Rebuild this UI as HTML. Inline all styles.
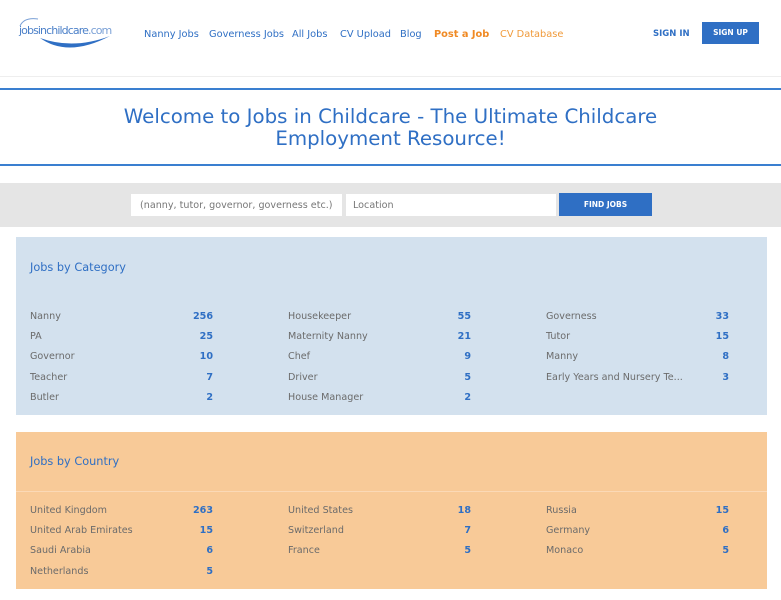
<!DOCTYPE html>
<html><head><meta charset="utf-8"><style>
*{margin:0;padding:0;box-sizing:border-box}
body{width:781px;height:600px;background:#fff;font-family:"DejaVu Sans","Liberation Sans",sans-serif;position:relative;overflow:hidden}
.a{position:absolute;white-space:nowrap}
.nav{font-size:9.8px;color:#2f6fc4;top:29px}
.row{position:absolute;font-size:9.6px;color:#6b6b6b;height:14px;line-height:14px}
.row b{position:absolute;right:0;color:#2f6fc4;font-weight:bold}
</style></head><body>
<svg class="a" style="left:18px;top:14px" width="96" height="40" viewBox="0 0 96 40">
<text x="1" y="20" font-size="11" fill="#4a7fc8" font-family="DejaVu Sans,sans-serif" letter-spacing="-0.9">jobsinchildcare<tspan fill="#7aa0d6">.com</tspan></text>
<path d="M22 24 Q50 44 92 22 Q55 36 22 24Z" fill="#2f6fc4"/>
<path d="M2 12 Q6 3 20 5" stroke="#7aa0d6" fill="none"/>
</svg>
<div class="a nav" style="left:144px">Nanny Jobs</div>
<div class="a nav" style="left:209px">Governess Jobs</div>
<div class="a nav" style="left:292px">All Jobs</div>
<div class="a nav" style="left:340px">CV Upload</div>
<div class="a nav" style="left:400px">Blog</div>
<div class="a nav" style="left:434px;color:#f08a24;font-weight:bold">Post a Job</div>
<div class="a nav" style="left:500px;color:#f09a3a">CV Database</div>
<div class="a" style="left:653px;top:29px;font-size:8.5px;font-weight:bold;color:#2f6fc4">SIGN IN</div>
<div class="a" style="left:702px;top:22px;width:57px;height:22px;background:#2f6fc4;color:#fff;font-size:7.5px;font-weight:bold;text-align:center;line-height:22px">SIGN UP</div>
<div class="a" style="left:0;top:76px;width:781px;height:1px;background:#eee"></div>
<div class="a" style="left:0;top:88px;width:781px;height:2px;background:#3a7fd0"></div>
<div class="a" style="left:0;top:106px;width:781px;text-align:center;font-size:19.8px;color:#2f6fc4;line-height:22px;white-space:normal">Welcome to Jobs in Childcare - The Ultimate Childcare<br>Employment Resource!</div>
<div class="a" style="left:0;top:164px;width:781px;height:2px;background:#3a7fd0"></div>
<div class="a" style="left:0;top:183px;width:781px;height:44px;background:#e5e5e5"></div>
<div class="a" style="left:131px;top:194px;width:211px;height:22px;background:#fff;font-size:9.6px;color:#777;padding:6px 9px">(nanny, tutor, governor, governess etc.)</div>
<div class="a" style="left:346px;top:194px;width:210px;height:22px;background:#fff;font-size:9.6px;color:#777;padding:6px 7px">Location</div>
<div class="a" style="left:559px;top:193px;width:93px;height:23px;background:#2f6fc4;color:#fff;font-size:7.5px;font-weight:bold;text-align:center;line-height:23px">FIND JOBS</div>
<div class="a" style="left:16px;top:237px;width:751px;height:178px;background:#d3e1ee"></div>
<div class="a" style="left:30px;top:261px;font-size:11.3px;color:#2f6fc4">Jobs by Category</div>
<div class="a" style="left:16px;top:432px;width:751px;height:157px;background:#f8ca98"></div>
<div class="a" style="left:16px;top:491px;width:751px;height:1px;background:#fbd9b6"></div>
<div class="a" style="left:30px;top:455px;font-size:11.3px;color:#2f6fc4">Jobs by Country</div>

<div class="row" style="left:30px;top:310px;width:183px">Nanny<b>256</b></div>
<div class="row" style="left:30px;top:330px;width:183px">PA<b>25</b></div>
<div class="row" style="left:30px;top:350px;width:183px">Governor<b>10</b></div>
<div class="row" style="left:30px;top:371px;width:183px">Teacher<b>7</b></div>
<div class="row" style="left:30px;top:391px;width:183px">Butler<b>2</b></div>
<div class="row" style="left:288px;top:310px;width:183px">Housekeeper<b>55</b></div>
<div class="row" style="left:288px;top:330px;width:183px">Maternity Nanny<b>21</b></div>
<div class="row" style="left:288px;top:350px;width:183px">Chef<b>9</b></div>
<div class="row" style="left:288px;top:371px;width:183px">Driver<b>5</b></div>
<div class="row" style="left:288px;top:391px;width:183px">House Manager<b>2</b></div>
<div class="row" style="left:546px;top:310px;width:183px">Governess<b>33</b></div>
<div class="row" style="left:546px;top:330px;width:183px">Tutor<b>15</b></div>
<div class="row" style="left:546px;top:350px;width:183px">Manny<b>8</b></div>
<div class="row" style="left:546px;top:371px;width:183px">Early Years and Nursery Te...<b>3</b></div>

<div class="row" style="left:30px;top:504px;width:183px">United Kingdom<b>263</b></div>
<div class="row" style="left:30px;top:524px;width:183px">United Arab Emirates<b>15</b></div>
<div class="row" style="left:30px;top:544px;width:183px">Saudi Arabia<b>6</b></div>
<div class="row" style="left:30px;top:565px;width:183px">Netherlands<b>5</b></div>
<div class="row" style="left:288px;top:504px;width:183px">United States<b>18</b></div>
<div class="row" style="left:288px;top:524px;width:183px">Switzerland<b>7</b></div>
<div class="row" style="left:288px;top:544px;width:183px">France<b>5</b></div>
<div class="row" style="left:546px;top:504px;width:183px">Russia<b>15</b></div>
<div class="row" style="left:546px;top:524px;width:183px">Germany<b>6</b></div>
<div class="row" style="left:546px;top:544px;width:183px">Monaco<b>5</b></div>
</body></html>
